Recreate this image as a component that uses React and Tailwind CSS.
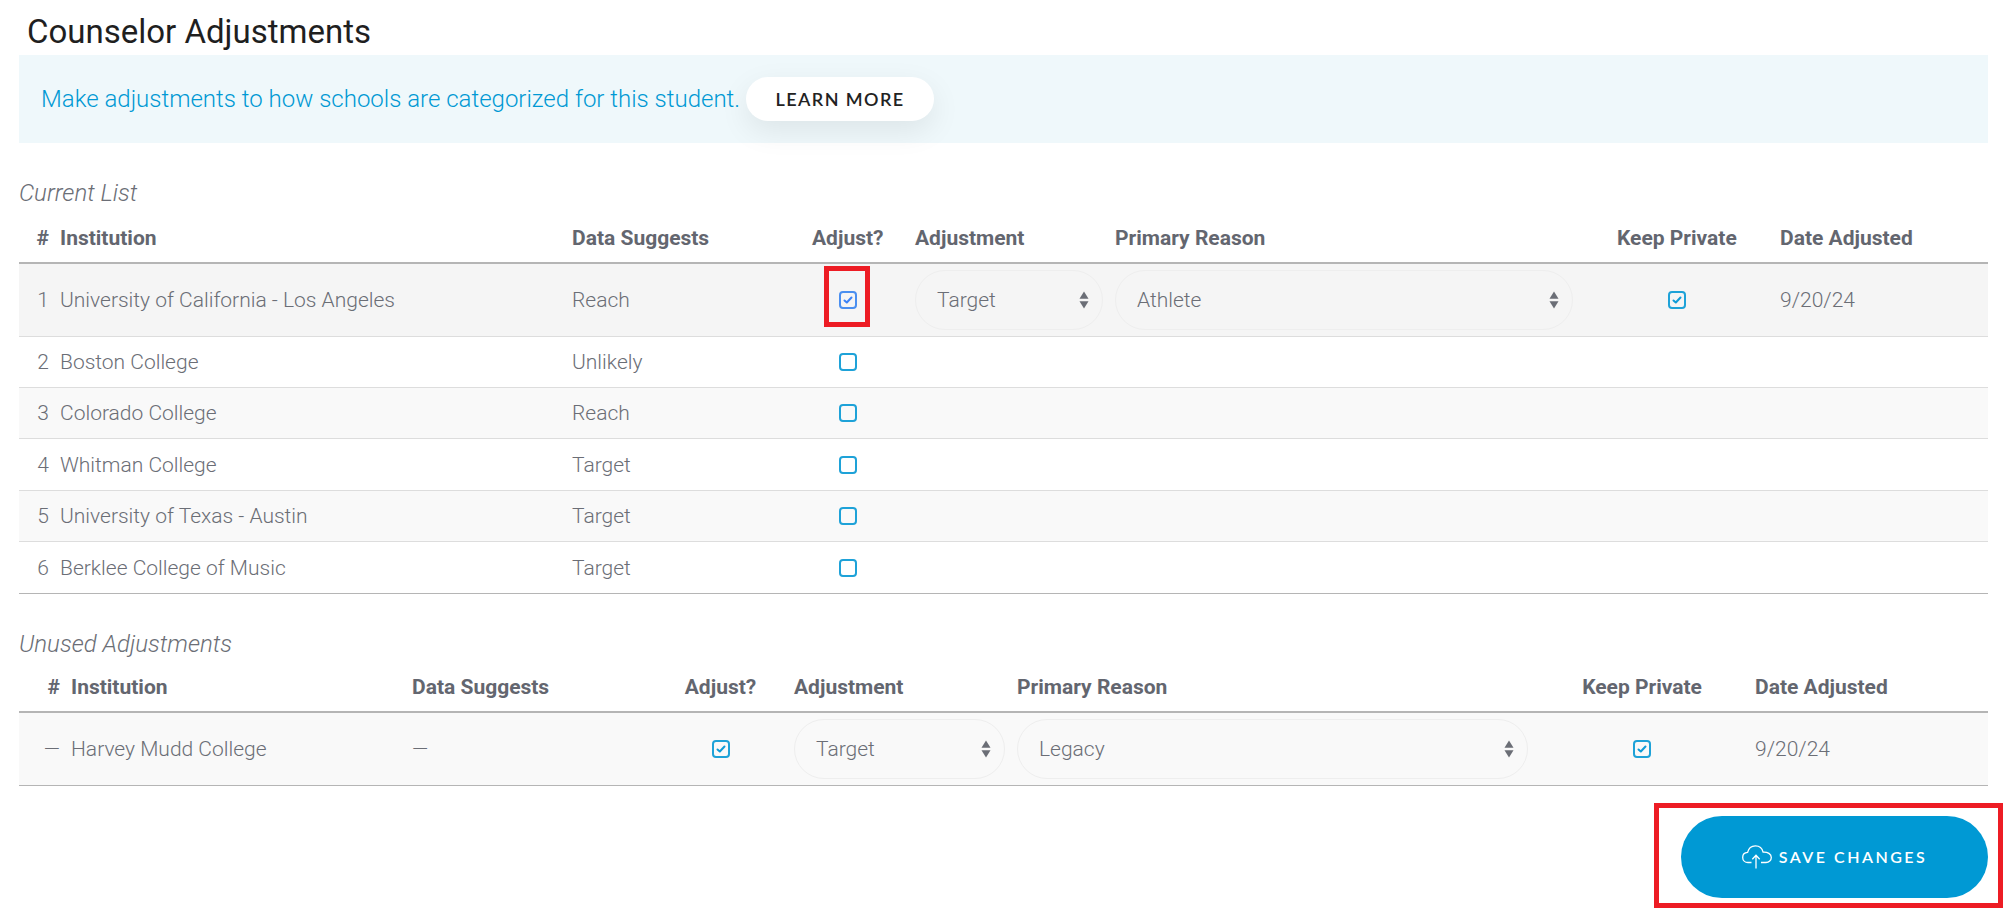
import React from 'react'

const font = "font-['Roboto',sans-serif]"

const currentRows = [
  { n: 1, name: 'University of California - Los Angeles', suggests: 'Reach', adjusted: true, adjustment: 'Target', reason: 'Athlete', date: '9/20/24' },
  { n: 2, name: 'Boston College', suggests: 'Unlikely' },
  { n: 3, name: 'Colorado College', suggests: 'Reach' },
  { n: 4, name: 'Whitman College', suggests: 'Target' },
  { n: 5, name: 'University of Texas - Austin', suggests: 'Target' },
  { n: 6, name: 'Berklee College of Music', suggests: 'Target' },
]

function Checkbox({ checked, focused }) {
  return (
    <span className={`mx-auto flex h-[18px] w-[18px] items-center justify-center rounded-[4px] border-2 bg-transparent ${focused ? 'border-[#4a8ff0]' : 'border-[#1ea2d8]'}`}>
      {checked && (
        <svg width="12" height="12" viewBox="0 0 12 12" fill="none" stroke={focused ? '#3b82f6' : '#0f9bd7'} strokeWidth="2" strokeLinecap="round" strokeLinejoin="round">
          <path d="M2.500 6.500 4.800 8.500 9.500 3.500" />
        </svg>
      )}
    </span>
  )
}

function Pill({ value }) {
  return (
    <div className="flex h-[60px] items-center justify-between rounded-[30px] border border-[#eeeeee] pl-[21px] pr-[13px]">
      <span className="pt-[2px]">{value}</span>
      <svg width="10" height="18" viewBox="0 0 10 18" fill="#6b6e76">
        <path d="M5 0.500 9.500 7.800H0.500Z" />
        <path d="M5 17.500 0.500 10.200H9.500Z" />
      </svg>
    </div>
  )
}

function Head({ children, className }) {
  return <div className={`font-bold text-[#63666f] ${className}`}>{children}</div>
}

function Columns({ cols, className, children }) {
  return <div className={`grid items-center ${cols} ${className}`}>{children}</div>
}

const cols1 = 'grid-cols-[41px_512px_240px_71px_32px_188px_12px_458px_44px_119px_44px_1fr]'
const cols2 = 'grid-cols-[52px_341px_272px_73px_37px_211px_12px_511px_54px_120px_53px_1fr]'

function HeaderRow({ cols, className }) {
  return (
    <Columns cols={cols} className={`border-b-2 border-[#b5b5b5] ${className}`}>
      <Head className="pr-[11px] text-right">#</Head>
      <Head>Institution</Head>
      <Head>Data Suggests</Head>
      <Head className="text-center whitespace-nowrap">Adjust?</Head>
      <span />
      <Head>Adjustment</Head>
      <span />
      <Head>Primary Reason</Head>
      <span />
      <Head className="text-center whitespace-nowrap">Keep Private</Head>
      <span />
      <Head className="whitespace-nowrap">Date Adjusted</Head>
    </Columns>
  )
}

function Row({ cols, num, name, suggests, adjusted, adjustment, reason, date, bg, height, border, focused }) {
  return (
    <Columns cols={cols} className={`${height} border-b ${border} ${bg}`}>
      <div className="pr-[11px] pt-[2px] text-right">{num}</div>
      <div className="pt-[2px]">{name}</div>
      <div className="pt-[2px]">{suggests}</div>
      <Checkbox checked={adjusted} focused={focused} />
      <span />
      {adjusted ? <Pill value={adjustment} /> : <span />}
      <span />
      {adjusted ? <Pill value={reason} /> : <span />}
      <span />
      {adjusted ? <Checkbox checked /> : <span />}
      <span />
      <div className="pt-[2px]">{date}</div>
    </Columns>
  )
}

export default function App() {
  return (
    <div className={`relative h-[915px] w-full overflow-hidden bg-white ${font} text-[21px] font-light text-[#6b6e76]`}>
      <div className="px-[19px] pr-[20px]">
        <h1 className="h-[55px] pl-[8px] pt-[11px] text-[33px] leading-[42px] font-normal text-[#1f1f1f]">Counselor Adjustments</h1>

        <div className="flex h-[88px] items-center gap-[6px] bg-[#eff8fb] pl-[22px]">
          <span className="text-[24px] text-[#0099d4]">Make adjustments to how schools are categorized for this student.</span>
          <button className="h-[44px] w-[188px] rounded-[22px] bg-white font-['Lato',sans-serif] text-[18px] font-semibold tracking-[1.4px] text-[#222222] shadow-[0_10px_30px_rgba(0,0,0,0.08)]">
            LEARN MORE
          </button>
        </div>

        <div className="mt-[36px] h-[28px] text-[24px] leading-[28px] italic">Current List</div>
        <HeaderRow cols={cols1} className="h-[57px] pt-[8px]" />
        {currentRows.map((r, i) => (
          <Row
            key={r.n}
            cols={cols1}
            num={r.n}
            name={r.name}
            suggests={r.suggests}
            adjusted={r.adjusted}
            adjustment={r.adjustment}
            reason={r.reason}
            date={r.date}
            focused={i === 0}
            bg={i === 0 ? 'bg-[#f5f5f5]' : i % 2 === 0 ? 'bg-[#f9f9f9]' : 'bg-white'}
            height={i === 0 ? 'h-[73px]' : i === 3 || i === 5 ? 'h-[52px]' : 'h-[51px]'}
            border={i === 5 ? 'border-[#b5b5b5]' : 'border-[#dddddd]'}
          />
        ))}

        <div className="mt-[36px] h-[28px] text-[24px] leading-[28px] italic">Unused Adjustments</div>
        <HeaderRow cols={cols2} className="h-[55px] pt-[7px]" />
        <Row
          cols={cols2}
          num="—"
          name="Harvey Mudd College"
          suggests="—"
          adjusted
          adjustment="Target"
          reason="Legacy"
          date="9/20/24"
          bg="bg-[#f9f9f9]"
          height="h-[73px]"
          border="border-[#b5b5b5]"
        />

        <div className="mt-[30px] flex justify-end">
          <button className="flex h-[82px] w-[307px] items-center justify-center gap-[7px] rounded-[41px] bg-[#0099d4] font-['Lato',sans-serif] text-[16px] font-semibold tracking-[2.5px] text-white">
            <svg width="30" height="24" viewBox="0 0 30 24" fill="none" stroke="white" strokeWidth="1.3">
              <path d="M9.500 17.500H6C3 17.500.7 15.300.7 12.400.7 9.600 2.800 7.600 5.600 7.400 6.500 3.500 9.500.8 13.400.8c3.800 0 6.900 2.600 7.700 6.300 4.600-.3 8.200 2 8.200 5.300 0 2.900-2.400 5.100-5.300 5.100H19" />
              <path d="M14 23.500V10.500M10.300 14.200 14 10.300l3.700 3.900" />
            </svg>
            SAVE CHANGES
          </button>
        </div>
      </div>

      {/* red annotation boxes */}
      <div className="absolute left-[824px] top-[266px] h-[61px] w-[46px] border-[5px] border-[#ed1c24]" />
      <div className="absolute left-[1654px] top-[803px] h-[105px] w-[349px] border-[5px] border-[#ed1c24]" />
    </div>
  )
}
